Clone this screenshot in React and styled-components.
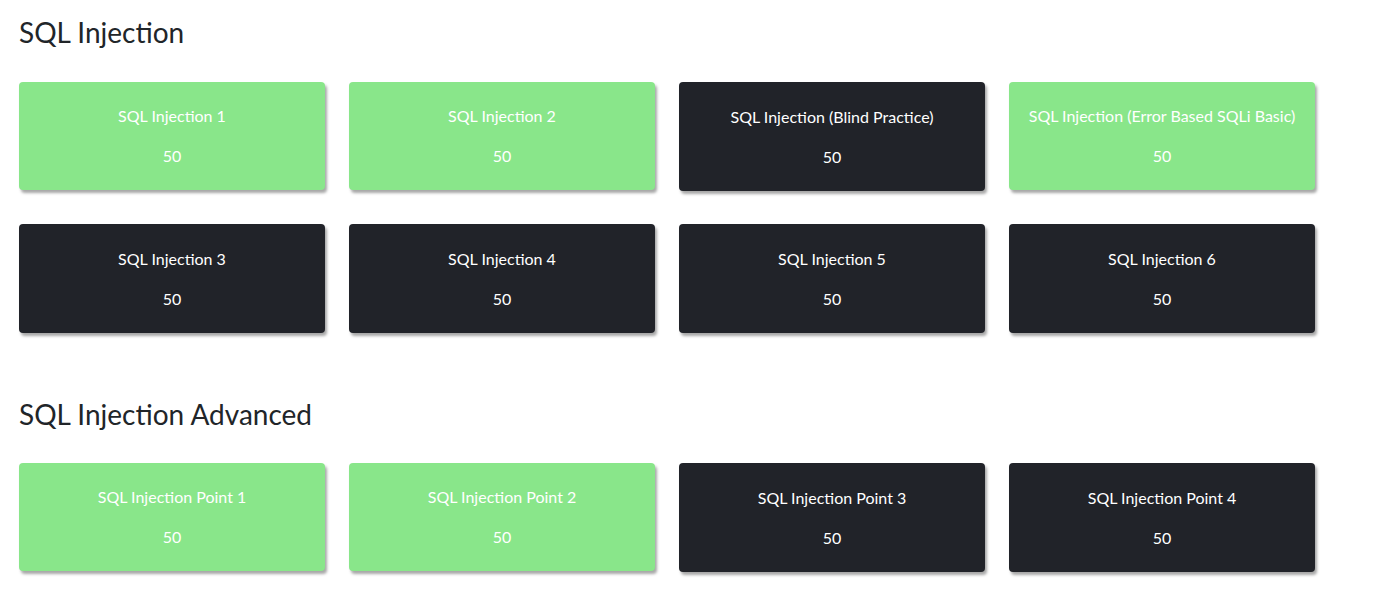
import React from 'react';
import styled, { createGlobalStyle } from 'styled-components';

const GlobalStyle = createGlobalStyle`
	body {
		margin: 0;
		background: #ffffff;
		font-family: 'Lato', 'Liberation Sans', sans-serif;
	}
`;

const Page = styled.div`
	padding: 15px 19px 20px;
`;

const Section = styled.section`
	& + & {
		margin-top: 64px;
	}
`;

const Heading = styled.h2`
	margin: 0 0 ${(props) => (props.first ? '33px' : '32px')};
	font-size: 28px;
	font-weight: 400;
	line-height: 34px;
	color: #212529;
`;

const Grid = styled.div`
	display: grid;
	grid-template-columns: repeat(4, 306px);
	column-gap: 24px;
	row-gap: 33px;
	align-items: start;
`;

const Card = styled.div`
	display: flex;
	flex-direction: column;
	align-items: center;
	gap: 20px;
	box-sizing: border-box;
	height: ${(props) => (props.solved ? '108px' : '109px')};
	padding-top: ${(props) => (props.solved ? '24px' : '25px')};
	border-radius: 4px;
	background: ${(props) => (props.solved ? '#89e68a' : '#212329')};
	box-shadow: 2px 3px 3px rgba(0, 0, 0, 0.35);
	color: #ffffff;
	cursor: pointer;
`;

const Title = styled.div`
	font-size: 16px;
	line-height: 20px;
	text-align: center;
	white-space: nowrap;
`;

const Points = styled.div`
	font-size: 16px;
	line-height: 20px;
`;

const sections = [
	{
		name: 'SQL Injection',
		challenges: [
			{ title: 'SQL Injection 1', solved: true },
			{ title: 'SQL Injection 2', solved: true },
			{ title: 'SQL Injection (Blind Practice)', solved: false },
			{ title: 'SQL Injection (Error Based SQLi Basic)', solved: true },
			{ title: 'SQL Injection 3', solved: false },
			{ title: 'SQL Injection 4', solved: false },
			{ title: 'SQL Injection 5', solved: false },
			{ title: 'SQL Injection 6', solved: false },
		],
	},
	{
		name: 'SQL Injection Advanced',
		challenges: [
			{ title: 'SQL Injection Point 1', solved: true },
			{ title: 'SQL Injection Point 2', solved: true },
			{ title: 'SQL Injection Point 3', solved: false },
			{ title: 'SQL Injection Point 4', solved: false },
		],
	},
];

const App = () => {
	return (
		<>
			<GlobalStyle />
			<Page>
				{sections.map((section, i) => (
					<Section key={section.name}>
						<Heading first={i === 0}>{section.name}</Heading>
						<Grid>
							{section.challenges.map((c) => (
								<Card key={c.title} solved={c.solved}>
									<Title>{c.title}</Title>
									<Points>50</Points>
								</Card>
							))}
						</Grid>
					</Section>
				))}
			</Page>
		</>
	);
};

export default App;
